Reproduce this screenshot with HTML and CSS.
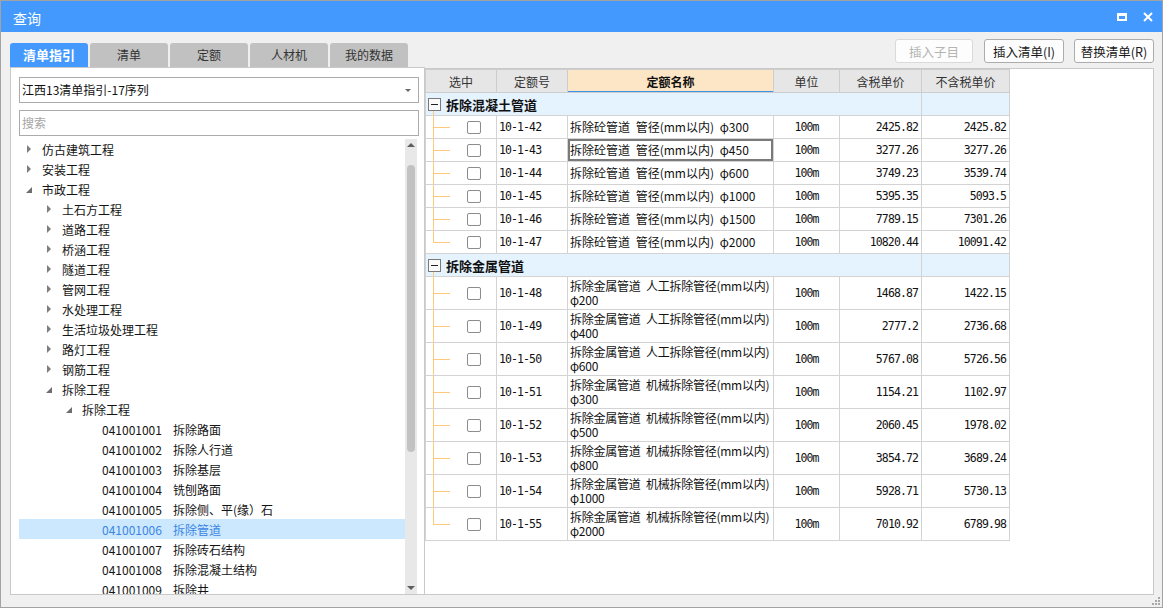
FILE: index.html
```html
<!DOCTYPE html>
<html lang="zh">
<head>
<meta charset="utf-8">
<title>查询</title>
<link rel="stylesheet" href="styles.css">
</head>
<body>
<div class="window">
  <div class="titlebar">
    <span class="title">查询</span>
    <div class="win-btns">
      <span class="ico-max"></span>
      <svg class="ico-close" width="10" height="10" viewBox="0 0 10 10"><path d="M1 1 L9 9 M9 1 L1 9" stroke="#fff" stroke-width="2" fill="none"/></svg>
    </div>
  </div>
  <div class="toolbar">
    <div class="tabs">
      <div class="tab active">清单指引</div>
      <div class="tab">清单</div>
      <div class="tab">定额</div>
      <div class="tab">人材机</div>
      <div class="tab">我的数据</div>
    </div>
    <div class="actions">
      <button class="btn disabled">插入子目</button>
      <button class="btn wide">插入清单(I)</button>
      <button class="btn wide">替换清单(R)</button>
    </div>
  </div>
  <div class="main">
    <div class="left">
      <div class="select">江西13清单指引-17序列<span class="caret"></span></div>
      <div class="search">搜索</div>
      <div class="tree">
        <div class="tree-list">
          <div class="row l0"><i class="tg c"></i>仿古建筑工程</div>
          <div class="row l0"><i class="tg c"></i>安装工程</div>
          <div class="row l0"><i class="tg e"></i>市政工程</div>
          <div class="row l1"><i class="tg c"></i>土石方工程</div>
          <div class="row l1"><i class="tg c"></i>道路工程</div>
          <div class="row l1"><i class="tg c"></i>桥涵工程</div>
          <div class="row l1"><i class="tg c"></i>隧道工程</div>
          <div class="row l1"><i class="tg c"></i>管网工程</div>
          <div class="row l1"><i class="tg c"></i>水处理工程</div>
          <div class="row l1"><i class="tg c"></i>生活垃圾处理工程</div>
          <div class="row l1"><i class="tg c"></i>路灯工程</div>
          <div class="row l1"><i class="tg c"></i>钢筋工程</div>
          <div class="row l1"><i class="tg e"></i>拆除工程</div>
          <div class="row l2"><i class="tg e"></i>拆除工程</div>
          <div class="row l3"><i class="tg"></i><span class="code">041001001</span>拆除路面</div>
          <div class="row l3"><i class="tg"></i><span class="code">041001002</span>拆除人行道</div>
          <div class="row l3"><i class="tg"></i><span class="code">041001003</span>拆除基层</div>
          <div class="row l3"><i class="tg"></i><span class="code">041001004</span>铣刨路面</div>
          <div class="row l3"><i class="tg"></i><span class="code">041001005</span>拆除侧、平(缘）石</div>
          <div class="row l3 selected"><i class="tg"></i><span class="code">041001006</span>拆除管道</div>
          <div class="row l3"><i class="tg"></i><span class="code">041001007</span>拆除砖石结构</div>
          <div class="row l3"><i class="tg"></i><span class="code">041001008</span>拆除混凝土结构</div>
          <div class="row l3"><i class="tg"></i><span class="code">041001009</span>拆除井</div>
        </div>
        <div class="sb">
          <span class="sb-up"></span>
          <span class="sb-thumb"></span>
          <span class="sb-down"></span>
        </div>
      </div>
    </div>
    <div class="right">
      <table class="grid">
        <colgroup>
          <col class="c1"><col class="c2"><col class="c3"><col class="c4"><col class="c5"><col class="c6">
        </colgroup>
        <thead>
          <tr><th>选中</th><th>定额号</th><th class="hl">定额名称</th><th>单位</th><th>含税单价</th><th>不含税单价</th></tr>
        </thead>
        <tbody>
          <tr class="grp"><td colspan="5" class="grp-cell"><span class="box"></span>拆除混凝土管道</td><td></td></tr>
          <tr><td class="sel"><span class="cb"></span></td><td class="mono">10-1-42</td><td class="name">拆除砼管道 管径(mm以内) φ300</td><td class="mono ctr">100m</td><td class="mono num">2425.82</td><td class="mono num">2425.82</td></tr>
          <tr><td class="sel"><span class="cb"></span></td><td class="mono">10-1-43</td><td class="name focus">拆除砼管道 管径(mm以内) φ450</td><td class="mono ctr">100m</td><td class="mono num">3277.26</td><td class="mono num">3277.26</td></tr>
          <tr><td class="sel"><span class="cb"></span></td><td class="mono">10-1-44</td><td class="name">拆除砼管道 管径(mm以内) φ600</td><td class="mono ctr">100m</td><td class="mono num">3749.23</td><td class="mono num">3539.74</td></tr>
          <tr><td class="sel"><span class="cb"></span></td><td class="mono">10-1-45</td><td class="name">拆除砼管道 管径(mm以内) φ1000</td><td class="mono ctr">100m</td><td class="mono num">5395.35</td><td class="mono num">5093.5</td></tr>
          <tr><td class="sel"><span class="cb"></span></td><td class="mono">10-1-46</td><td class="name">拆除砼管道 管径(mm以内) φ1500</td><td class="mono ctr">100m</td><td class="mono num">7789.15</td><td class="mono num">7301.26</td></tr>
          <tr><td class="sel last"><span class="cb"></span></td><td class="mono">10-1-47</td><td class="name">拆除砼管道 管径(mm以内) φ2000</td><td class="mono ctr">100m</td><td class="mono num">10820.44</td><td class="mono num">10091.42</td></tr>
          <tr class="grp"><td colspan="5" class="grp-cell"><span class="box"></span>拆除金属管道</td><td></td></tr>
          <tr class="tall"><td class="sel"><span class="cb"></span></td><td class="mono">10-1-48</td><td class="name">拆除金属管道 人工拆除管径(mm以内)<br>φ200</td><td class="mono ctr">100m</td><td class="mono num">1468.87</td><td class="mono num">1422.15</td></tr>
          <tr class="tall"><td class="sel"><span class="cb"></span></td><td class="mono">10-1-49</td><td class="name">拆除金属管道 人工拆除管径(mm以内)<br>φ400</td><td class="mono ctr">100m</td><td class="mono num">2777.2</td><td class="mono num">2736.68</td></tr>
          <tr class="tall"><td class="sel"><span class="cb"></span></td><td class="mono">10-1-50</td><td class="name">拆除金属管道 人工拆除管径(mm以内)<br>φ600</td><td class="mono ctr">100m</td><td class="mono num">5767.08</td><td class="mono num">5726.56</td></tr>
          <tr class="tall"><td class="sel"><span class="cb"></span></td><td class="mono">10-1-51</td><td class="name">拆除金属管道 机械拆除管径(mm以内)<br>φ300</td><td class="mono ctr">100m</td><td class="mono num">1154.21</td><td class="mono num">1102.97</td></tr>
          <tr class="tall"><td class="sel"><span class="cb"></span></td><td class="mono">10-1-52</td><td class="name">拆除金属管道 机械拆除管径(mm以内)<br>φ500</td><td class="mono ctr">100m</td><td class="mono num">2060.45</td><td class="mono num">1978.02</td></tr>
          <tr class="tall"><td class="sel"><span class="cb"></span></td><td class="mono">10-1-53</td><td class="name">拆除金属管道 机械拆除管径(mm以内)<br>φ800</td><td class="mono ctr">100m</td><td class="mono num">3854.72</td><td class="mono num">3689.24</td></tr>
          <tr class="tall"><td class="sel"><span class="cb"></span></td><td class="mono">10-1-54</td><td class="name">拆除金属管道 机械拆除管径(mm以内)<br>φ1000</td><td class="mono ctr">100m</td><td class="mono num">5928.71</td><td class="mono num">5730.13</td></tr>
          <tr class="tall"><td class="sel last"><span class="cb"></span></td><td class="mono">10-1-55</td><td class="name">拆除金属管道 机械拆除管径(mm以内)<br>φ2000</td><td class="mono ctr">100m</td><td class="mono num">7010.92</td><td class="mono num">6789.98</td></tr>
        </tbody>
      </table>
    </div>
  </div>
  <div class="statusbar">
    <svg class="grip" width="8" height="8" viewBox="0 0 8 8" fill="#a8a8a8">
      <rect x="6" y="0" width="2" height="2"/>
      <rect x="3" y="3" width="2" height="2"/><rect x="6" y="3" width="2" height="2"/>
      <rect x="0" y="6" width="2" height="2"/><rect x="3" y="6" width="2" height="2"/><rect x="6" y="6" width="2" height="2"/>
    </svg>
  </div>
</div>
</body>
</html>
```

FILE: styles.css
```css
html, body {
  margin: 0;
  padding: 0;
}
body {
  width: 1163px;
  height: 608px;
  overflow: hidden;
  font-family: "Noto Sans CJK SC", "Noto Sans", sans-serif;
  font-size: 12px;
  color: #1a1a1a;
}
.window {
  box-sizing: border-box;
  width: 1163px;
  height: 608px;
  border: 1px solid #a3a3a3;
  background: #f0f0f0;
  display: flex;
  flex-direction: column;
}
.titlebar {
  flex: none;
  height: 31px;
  background: #4499ff;
  display: flex;
  align-items: center;
  padding: 0 9px 0 12px;
}
.title {
  color: #fff;
  font-size: 14px;
  padding-top: 3px;
}
.win-btns {
  margin-left: auto;
  display: flex;
  align-items: center;
  gap: 16px;
}
.ico-max {
  display: block;
  box-sizing: border-box;
  width: 10px;
  height: 8px;
  border: 2px solid #fff;
  border-top-width: 3px;
}
.ico-close {
  display: block;
}
.toolbar {
  flex: none;
  height: 35px;
  display: flex;
  padding: 0 8px 0 9px;
}
.tabs {
  display: flex;
  gap: 2px;
  align-self: flex-end;
}
.tab {
  width: 78px;
  height: 24px;
  line-height: 24px;
  text-align: center;
  background: #c1c1c1;
  color: #333;
  font-size: 12px;
  border-radius: 3px 3px 0 0;
}
.tab.active {
  background: #4499ff;
  color: #fff;
  font-weight: bold;
  font-size: 13px;
}
.actions {
  margin-left: auto;
  display: flex;
  gap: 10px;
  padding-top: 7px;
}
.btn {
  box-sizing: border-box;
  width: 78px;
  height: 24px;
  padding: 0;
  background: #fdfdfd;
  border: 1px solid #acacac;
  border-radius: 3px;
  font-family: "Noto Sans CJK SC", "Noto Sans", sans-serif;
  font-size: 12.5px;
  color: #1a1a1a;
}
.btn.wide {
  width: 80px;
}
.btn.disabled {
  color: #b4b4b4;
  border-color: #dadada;
  margin-right: 1px;
}
.main {
  flex: none;
  height: 528px;
  display: flex;
  padding: 0 8px 0 9px;
}
.left {
  box-sizing: border-box;
  width: 415px;
  flex: none;
  background: #fff;
  border: 1px solid #c9c9c9;
  padding: 9px 5px 0 8px;
  display: flex;
  flex-direction: column;
}
.select, .search {
  box-sizing: border-box;
  height: 26px;
  border: 1px solid #ababab;
  line-height: 24px;
  padding-left: 2px;
  display: flex;
  align-items: center;
}
.select {
  color: #111;
}
.caret {
  margin-left: auto;
  margin-right: 7px;
  width: 0;
  height: 0;
  border-left: 3px solid transparent;
  border-right: 3px solid transparent;
  border-top: 3px solid #6b6b6b;
}
.search {
  margin-top: 7px;
  color: #a5a5a5;
}
.tree {
  flex: 1;
  min-height: 0;
  margin-top: 3px;
  display: flex;
  overflow: hidden;
}
.tree-list {
  width: 386px;
  flex: none;
  overflow: hidden;
}
.row {
  height: 20px;
  display: flex;
  align-items: center;
  white-space: nowrap;
  color: #141414;
}
.l1 { padding-left: 20px; }
.l2 { padding-left: 40px; }
.l3 { padding-left: 60px; }
.row.selected {
  background: #cce8ff;
  color: #3a85e4;
}
.tg {
  flex: none;
  width: 23px;
  height: 20px;
  display: flex;
  align-items: center;
}
.tg.c::before {
  content: "";
  margin-left: 8px;
  width: 0;
  height: 0;
  border-left: 4px solid #7d7d7d;
  border-top: 4px solid transparent;
  border-bottom: 4px solid transparent;
}
.tg.e::before {
  content: "";
  margin-left: 7px;
  margin-top: 2px;
  width: 0;
  height: 0;
  border-bottom: 6px solid #6e6e6e;
  border-left: 6px solid transparent;
}
.code {
  display: inline-block;
  width: 71px;
}
.sb {
  width: 12px;
  flex: none;
  background: #e8e8e8;
  display: flex;
  flex-direction: column;
  align-items: center;
}
.sb-up {
  margin-top: 4px;
  width: 0;
  height: 0;
  border-left: 4px solid transparent;
  border-right: 4px solid transparent;
  border-bottom: 4px solid #5e5e5e;
}
.sb-thumb {
  margin-top: 18px;
  width: 8px;
  height: 287px;
  border-radius: 4px;
  background: #c2c2c2;
}
.sb-down {
  margin-top: auto;
  margin-bottom: 4px;
  width: 0;
  height: 0;
  border-left: 4px solid transparent;
  border-right: 4px solid transparent;
  border-top: 4px solid #5e5e5e;
}
.right {
  flex: 1;
  margin-top: 1px;
  background: #fff;
  border: 1px solid #c9c9c9;
  border-left: none;
}
.grid {
  border-collapse: collapse;
  table-layout: fixed;
  width: 584px;
}
.c1 { width: 71px; }
.c2 { width: 71px; }
.c3 { width: 206px; }
.c4 { width: 66px; }
.c5 { width: 82px; }
.c6 { width: 88px; }
.grid th, .grid td {
  border: 1px solid #d3d3d3;
  padding: 0 2px;
  white-space: nowrap;
  overflow: hidden;
}
.grid th {
  height: 22px;
  background: #e6e6e6;
  border-color: #cdcdcd;
  font-weight: normal;
  color: #333;
  font-size: 12px;
  text-align: center;
}
.grid th.hl {
  background: #fde6c6;
  font-weight: bold;
  color: #111;
  box-shadow: inset 0 -1px 0 #3d8fe8;
}
.grid tr {
  height: 23px;
}
.grid tr.tall {
  height: 33px;
}
.grid tr.grp td {
  background: #e5f3ff;
}
.grp-cell {
  font-size: 13px;
  font-weight: bold;
  color: #111;
  padding-left: 0 !important;
  background-image: linear-gradient(#ffc97a, #ffc97a) !important;
  background-repeat: no-repeat !important;
  background-size: 1px 6px !important;
  background-position: 7px 100% !important;
}
.box {
  display: inline-block;
  box-sizing: border-box;
  width: 13px;
  height: 13px;
  border: 1px solid #7a7a7a;
  background: #fafafa linear-gradient(#222, #222) center / 7px 1px no-repeat;
  vertical-align: middle;
  margin: -2px 5px 0 2px;
}
.sel {
  padding: 0 !important;
  background:
    linear-gradient(#ffc97a, #ffc97a) 7px 0 / 1px 100% no-repeat,
    linear-gradient(#ffc97a, #ffc97a) 7px 50% / 17px 1px no-repeat;
}
.sel.last {
  background:
    linear-gradient(#ffc97a, #ffc97a) 7px 0 / 1px 50% no-repeat,
    linear-gradient(#ffc97a, #ffc97a) 7px 50% / 17px 1px no-repeat;
}
.cb {
  display: inline-block;
  box-sizing: border-box;
  width: 14px;
  height: 13px;
  border: 1px solid #8c8c8c;
  border-radius: 2px;
  background: #fff;
  margin: 0 0 2px 41px;
  vertical-align: middle;
}
.mono {
  font-family: "DejaVu Sans Mono", "Liberation Mono", monospace;
  font-size: 11.5px;
  letter-spacing: -0.9px;
  color: #111;
}
.ctr {
  text-align: center;
}
.num {
  text-align: right;
  padding-right: 3px !important;
}
.name {
  color: #111;
  line-height: 14px;
  word-spacing: 3px;
}
.tall .name {
  letter-spacing: -0.25px;
}
.name.focus {
  box-shadow: inset 0 0 0 2px #7a7a7a;
}
.statusbar {
  flex: 1;
  display: flex;
  justify-content: flex-end;
  align-items: flex-end;
  padding: 0 2px 2px 0;
}
.grip {
  display: block;
}
```
